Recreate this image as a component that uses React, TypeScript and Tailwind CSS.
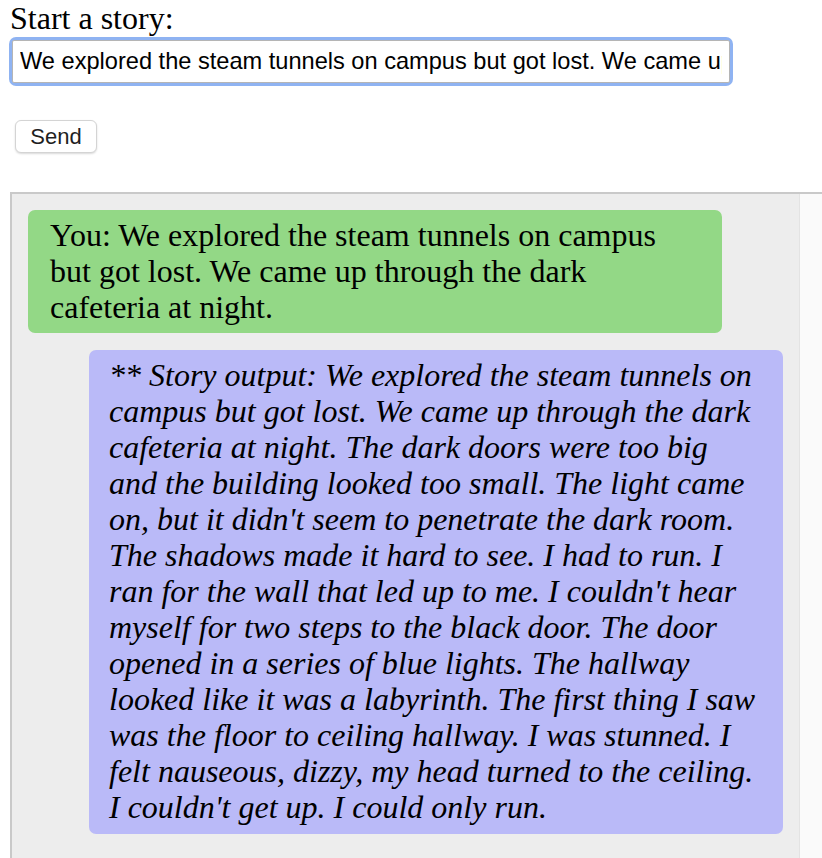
import React from "react";

const userLines = [
  "You: We explored the steam tunnels on campus",
  "but got lost. We came up through the dark",
  "cafeteria at night.",
];

const storyLines = [
  "** Story output: We explored the steam tunnels on",
  "campus but got lost. We came up through the dark",
  "cafeteria at night. The dark doors were too big",
  "and the building looked too small. The light came",
  "on, but it didn't seem to penetrate the dark room.",
  "The shadows made it hard to see. I had to run. I",
  "ran for the wall that led up to me. I couldn't hear",
  "myself for two steps to the black door. The door",
  "opened in a series of blue lights. The hallway",
  "looked like it was a labyrinth. The first thing I saw",
  "was the floor to ceiling hallway. I was stunned. I",
  "felt nauseous, dizzy, my head turned to the ceiling.",
  "I couldn't get up. I could only run.",
];

function Bubble({ lines, who }: { lines: string[]; who: "user" | "bot" }) {
  const mine = who === "user";
  return (
    <div
      className={
        mine
          ? "w-[694px] rounded-[7px] bg-[#93d886] px-[22px] pt-[7px] pb-[8px] self-start"
          : "w-[694px] rounded-[7px] bg-[#babaf8] px-[20px] pt-[7px] pb-[9px] self-end italic"
      }
    >
      {lines.map((l, i) => (
        <div key={i} className="whitespace-nowrap leading-[36px]">
          {l}
        </div>
      ))}
    </div>
  );
}

export default function App() {
  return (
    <div className="w-[822px] h-[858px] overflow-hidden bg-white text-black">
      <div className="pl-[10px] text-[32px] leading-[36px] font-['Liberation_Serif',serif]">
        Start a story:
      </div>

      <div className="ml-[9px] mt-[1px] w-[724px] rounded-[7px] bg-[#8fb3f2] p-[3px]">
        <input
          className="block h-[43px] w-full rounded-[2px] border border-[#b5b5b5] bg-white px-[7px] text-[23.6px] text-black outline-none font-['Liberation_Sans',sans-serif]"
          defaultValue="We explored the steam tunnels on campus but got lost. We came up through the dark cafeteria at night."
        />
      </div>

      <div className="mt-[34px] pl-[15px]">
        <button className="h-[33px] w-[82px] rounded-[6px] border border-[#d4d4d4] bg-white text-[22px] leading-none text-[#1f1f1f] shadow-[0_1px_2px_rgba(0,0,0,0.15)] font-['Liberation_Sans',sans-serif]">
          Send
        </button>
      </div>

      <div className="ml-[10px] mt-[39px] flex h-[700px] w-[830px] border-l-2 border-t-2 border-[#c9c9c9] bg-[#ededed]">
        <div className="flex w-[787px] flex-col gap-[17px] px-[16px] pt-[16px] text-[32px] font-['Liberation_Serif',serif]">
          <Bubble lines={userLines} who="user" />
          <Bubble lines={storyLines} who="bot" />
        </div>
        <div className="w-[40px] border-l border-[#e3e3e3] bg-[#fafafa]" />
      </div>
    </div>
  );
}
